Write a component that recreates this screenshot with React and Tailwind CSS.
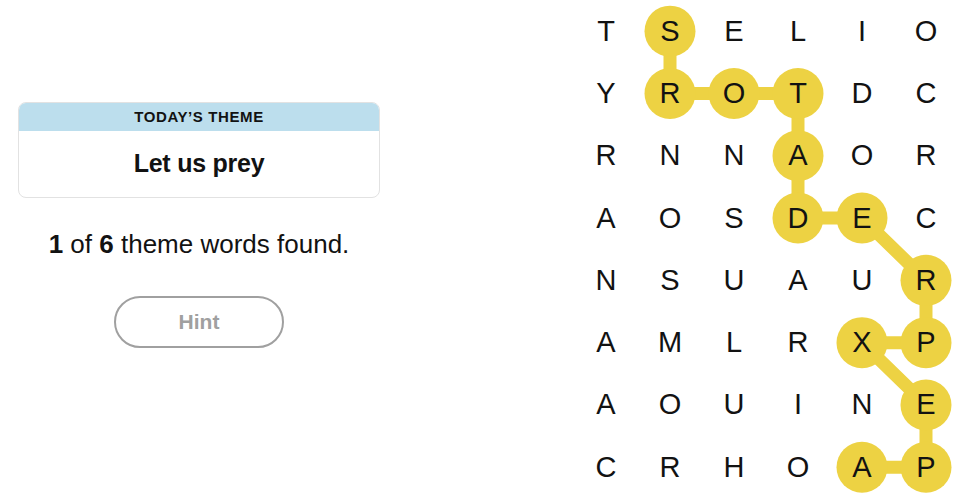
import React from "react";

const GRID = [
  ["T", "S", "E", "L", "I", "O"],
  ["Y", "R", "O", "T", "D", "C"],
  ["R", "N", "N", "A", "O", "R"],
  ["A", "O", "S", "D", "E", "C"],
  ["N", "S", "U", "A", "U", "R"],
  ["A", "M", "L", "R", "X", "P"],
  ["A", "O", "U", "I", "N", "E"],
  ["C", "R", "H", "O", "A", "P"],
];

const PATH = [
  [0, 1], [1, 1], [1, 2], [1, 3], [2, 3], [3, 3], [3, 4],
  [4, 5], [5, 5], [5, 4], [6, 5], [7, 5], [7, 4],
];

const CW = 64;
const RH = 62.3;
const YELLOW = "#edd243";

const cx = (c) => c * CW + CW / 2;
const cy = (r) => r * RH + RH / 2;

export default function App() {
  const points = PATH.map(([r, c]) => `${cx(c)},${cy(r)}`).join(" ");
  return (
    <div
      className="flex w-[958px] h-[500px] bg-white text-[#121212] overflow-hidden"
      style={{ fontFamily: '"Liberation Sans", Arial, sans-serif' }}
    >
      <div className="w-[400px] pl-[18px] pr-[20px] pt-[102px] flex flex-col items-center">
        <div className="w-full rounded-lg border border-[#e2e2e2] overflow-hidden">
          <div className="h-[28px] bg-[#bcdeed] flex items-center justify-center text-[15px] font-bold tracking-[0.04em] text-[#121212]">
            TODAY’S THEME
          </div>
          <div className="h-[66px] flex items-center justify-center text-[25px] font-bold tracking-[-0.01em]">
            Let us prey
          </div>
        </div>
        <div className="mt-[31px] h-[30px] flex items-center text-[26px] leading-none">
          <span className="font-bold">1</span>
          <span>&nbsp;of&nbsp;</span>
          <span className="font-bold">6</span>
          <span>&nbsp;theme words found.</span>
        </div>
        <button className="mt-[37px] w-[170px] h-[52px] rounded-full border-2 border-[#a0a0a0] text-[#a0a0a0] text-[21px] font-bold flex items-center justify-center">
          Hint
        </button>
      </div>
      <div className="ml-[174px] relative w-[384px] h-[498.4px]">
        <svg
          className="absolute inset-0"
          width="384"
          height="498.4"
          viewBox="0 0 384 498.4"
        >
          <polyline
            points={points}
            fill="none"
            stroke={YELLOW}
            strokeWidth="13"
            strokeLinejoin="round"
          />
          {PATH.map(([r, c]) => (
            <circle key={`${r}-${c}`} cx={cx(c)} cy={cy(r)} r="25.5" fill={YELLOW} />
          ))}
        </svg>
        <div className="relative grid grid-cols-[repeat(6,64px)] grid-rows-[repeat(8,62.3px)]">
          {GRID.map((row, r) =>
            row.map((ch, c) => (
              <div
                key={`${r}-${c}`}
                className="flex items-center justify-center text-[29px] leading-none text-[#121212]"
              >
                {ch}
              </div>
            ))
          )}
        </div>
      </div>
    </div>
  );
}
